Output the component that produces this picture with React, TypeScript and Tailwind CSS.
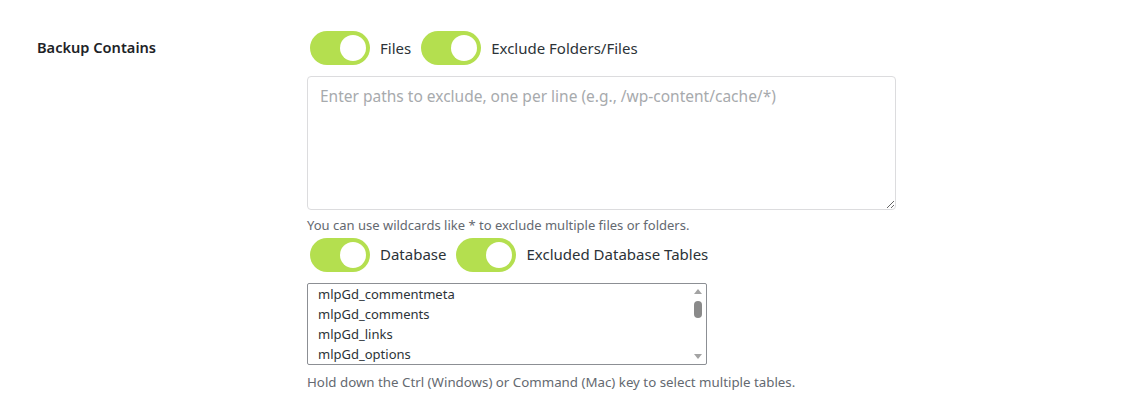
import { useState } from 'react';

const font = { fontFamily: '"Segoe UI", "Noto Sans", "Open Sans", sans-serif' };

function Toggle({ on, onChange, label }: { on: boolean; onChange: () => void; label: string }) {
  return (
    <label className="flex items-center gap-[10px] cursor-pointer">
      <button
        type="button"
        onClick={onChange}
        className={
          'relative w-[60px] h-[34px] rounded-full transition-colors ' +
          (on ? 'bg-[#b4df4f]' : 'bg-[#ccc]')
        }
      >
        <span
          className={
            'absolute top-[4px] w-[26px] h-[26px] rounded-full bg-white transition-all ' +
            (on ? 'left-[30px]' : 'left-[4px]')
          }
        />
      </button>
      <span className="text-[15px] text-[#2c3338]">{label}</span>
    </label>
  );
}

const tables = ['mlpGd_commentmeta', 'mlpGd_comments', 'mlpGd_links', 'mlpGd_options'];

export default function App() {
  const [files, setFiles] = useState(true);
  const [exclude, setExclude] = useState(true);
  const [db, setDb] = useState(true);
  const [excludeDb, setExcludeDb] = useState(true);

  return (
    <div className="bg-white w-[1131px] h-[404px] text-[#1d2327]" style={font}>
      <div className="flex pt-[31px]">
        <div className="w-[307px] pl-[37px] pt-[6px] text-[14.6px] font-semibold">Backup Contains</div>
        <div className="flex flex-col">
          <div className="flex items-center gap-[10px] pl-[3px]">
            <Toggle on={files} onChange={() => setFiles(!files)} label="Files" />
            <Toggle on={exclude} onChange={() => setExclude(!exclude)} label="Exclude Folders/Files" />
          </div>
          <textarea
            className="mt-[11px] w-[589px] h-[134px] border border-[#dcdcde] rounded-[4px] px-[12px] py-[8px] text-[15.5px] placeholder:text-[#a7aaad] outline-none"
            placeholder="Enter paths to exclude, one per line (e.g., /wp-content/cache/*)"
          />
          <p className="mt-[6px] text-[13px] text-[#646970]">You can use wildcards like * to exclude multiple files or folders.</p>
          <div className="flex items-center gap-[10px] pl-[3px] mt-[2px]">
            <Toggle on={db} onChange={() => setDb(!db)} label="Database" />
            <Toggle on={excludeDb} onChange={() => setExcludeDb(!excludeDb)} label="Excluded Database Tables" />
          </div>
          {/* lista de tabelas com barra de rolagem desenhada */}
          <div className="mt-[11px] w-[400px] h-[82px] border border-[#8c8f94] rounded-[2px] flex overflow-hidden">
            <div className="flex-1 pl-[10px] text-[13px] text-[#2c3338]">
              {tables.map(t => (
                <div key={t} className="h-[20px] leading-[20px]">{t}</div>
              ))}
            </div>
            <div className="w-[15px] flex flex-col items-center justify-between py-[5px] pr-[2px]">
              <svg width="8" height="5" viewBox="0 0 8 5"><path d="M0 5 L4 0 L8 5 Z" fill="#a3a3a3" /></svg>
              <div className="flex-1 w-full flex justify-center pt-[7px]">
                <div className="w-[8px] h-[17px] rounded-full bg-[#8a8a8a]" />
              </div>
              <svg width="8" height="5" viewBox="0 0 8 5"><path d="M0 0 L8 0 L4 5 Z" fill="#a3a3a3" /></svg>
            </div>
          </div>
          <p className="mt-[8px] text-[13.3px] text-[#646970]">Hold down the Ctrl (Windows) or Command (Mac) key to select multiple tables.</p>
        </div>
      </div>
    </div>
  );
}
